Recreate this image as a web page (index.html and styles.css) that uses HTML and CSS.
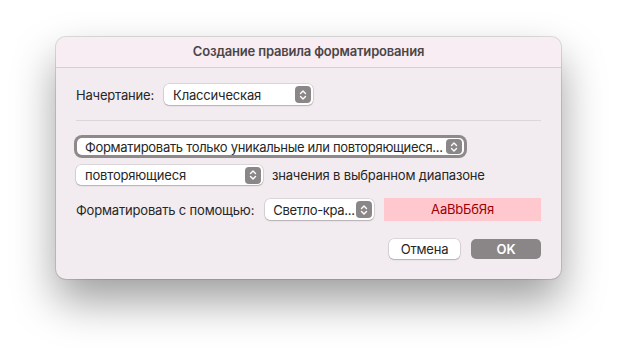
FILE: index.html
```html
<!DOCTYPE html>
<html lang="ru">
<head>
    <meta charset="UTF-8">
    <title>Создание правила форматирования</title>
    <link rel="stylesheet" href="styles.css">
</head>
<body>
    <div class="window">
        <div class="titlebar">Создание правила форматирования</div>

        <div class="content">
            <!-- стиль -->
            <div class="row row-style">
                <span class="label">Начертание:</span>
                <div class="popup popup-style">
                    <span class="popup-text">Классическая</span>
                    <span class="arrows"><svg width="8" height="12" viewBox="0 0 8 12"><path d="M1.5 4.5 L4 2 L6.5 4.5 M1.5 7.5 L4 10 L6.5 7.5" fill="none" stroke="#fff" stroke-width="1.4" stroke-linecap="round" stroke-linejoin="round"/></svg></span>
                </div>
            </div>

            <div class="divider"></div>

            <div class="focus-ring">
                <div class="popup popup-rule">
                    <span class="popup-text">Форматировать только уникальные или повторяющиеся...</span>
                    <span class="arrows"><svg width="8" height="12" viewBox="0 0 8 12"><path d="M1.5 4.5 L4 2 L6.5 4.5 M1.5 7.5 L4 10 L6.5 7.5" fill="none" stroke="#fff" stroke-width="1.4" stroke-linecap="round" stroke-linejoin="round"/></svg></span>
                </div>
            </div>

            <div class="row row-values">
                <div class="popup popup-dup">
                    <span class="popup-text">повторяющиеся</span>
                    <span class="arrows"><svg width="8" height="12" viewBox="0 0 8 12"><path d="M1.5 4.5 L4 2 L6.5 4.5 M1.5 7.5 L4 10 L6.5 7.5" fill="none" stroke="#fff" stroke-width="1.4" stroke-linecap="round" stroke-linejoin="round"/></svg></span>
                </div>
                <span class="label">значения в выбранном диапазоне</span>
            </div>

            <div class="row row-format">
                <span class="label">Форматировать с помощью:</span>
                <div class="popup popup-fill">
                    <span class="popup-text">Светло-кра...</span>
                    <span class="arrows"><svg width="8" height="12" viewBox="0 0 8 12"><path d="M1.5 4.5 L4 2 L6.5 4.5 M1.5 7.5 L4 10 L6.5 7.5" fill="none" stroke="#fff" stroke-width="1.4" stroke-linecap="round" stroke-linejoin="round"/></svg></span>
                </div>
                <div class="preview">АаВbБбЯя</div>
            </div>

            <div class="buttons">
                <button class="btn btn-cancel">Отмена</button>
                <button class="btn btn-ok">OK</button>
            </div>
        </div>
    </div>
</body>
</html>
```

FILE: styles.css
```css
* {
    box-sizing: border-box;
    margin: 0;
    padding: 0;
}

html, body {
    height: 100%;
}

body {
    font-family: 'Inter', 'Liberation Sans', sans-serif;
    font-size: 13px;
    letter-spacing: -0.18px;
    color: #262626;
    background: #ffffff;
    overflow: hidden;
}

.window {
    width: 505px;
    height: 242px;
    margin: 37px 0 0 56px;
    border-radius: 10px;
    background: #f2ecf0;
    box-shadow: 0 0 0 1px rgba(0,0,0,0.12), 0 22px 44px rgba(0,0,0,0.38);
    overflow: hidden;
}

.titlebar {
    height: 31px;
    line-height: 29px;
    text-align: center;
    font-weight: 600;
    color: #4b4548;
    background: #f7edf2;
    border-bottom: 1px solid #d6d0d3;
}

.content {
    padding: 16px 20px 0 20px;
    display: flex;
    flex-direction: column;
}

.row {
    display: flex;
    align-items: center;
}

.label {
    color: #262626;
    white-space: nowrap;
}

.popup {
    display: flex;
    align-items: center;
    justify-content: space-between;
    flex-shrink: 0;
    height: 21px;
    padding: 0 2px 0 9px;
    background: #ffffff;
    border-radius: 5px;
    box-shadow: 0 0 0 0.5px rgba(0,0,0,0.18), 0 1px 1.5px rgba(0,0,0,0.18);
}

.popup-text {
    white-space: nowrap;
}

.arrows {
    flex-shrink: 0;
    width: 16px;
    height: 17px;
    border-radius: 4px;
    background: #8b8789;
    display: flex;
    align-items: center;
    justify-content: center;
}

.row-style .label {
    margin-right: 10px;
}

.popup-style {
    width: 149px;
}

.divider {
    height: 1px;
    background: #dcd6d9;
    margin: 15px 0 14px 0;
}

.focus-ring {
    width: 393px;
    margin-left: -2px;
    padding: 3px;
    border-radius: 8px;
    background: #8e8a8c;
}

.popup-rule {
    height: 17px;
    box-shadow: none;
    padding-left: 8px;
}

.popup-rule .popup-text {
    letter-spacing: -0.3px;
}

.popup-rule .arrows {
    height: 15px;
}

.row-values {
    margin-top: 7px;
}

.popup-dup {
    width: 187px;
    height: 20px;
    margin-right: 9px;
}

.row-format {
    margin-top: 13px;
}

.row-format .label {
    margin-right: 11px;
}

.popup-fill {
    width: 109px;
    padding-left: 8px;
    margin-right: 10px;
}

.popup-fill .popup-text {
    letter-spacing: -0.3px;
}

.preview {
    flex: 1;
    height: 23px;
    line-height: 23px;
    text-align: center;
    background: #ffc7ce;
    color: #9c0006;
}

.buttons {
    display: flex;
    justify-content: flex-end;
    gap: 11px;
    margin-top: 18px;
}

.btn {
    font-family: inherit;
    font-size: 13px;
    letter-spacing: -0.18px;
    height: 20px;
    width: 71px;
    border: none;
    border-radius: 5px;
}

.btn-cancel {
    background: #ffffff;
    color: #262626;
    box-shadow: 0 0 0 0.5px rgba(0,0,0,0.18), 0 1px 1.5px rgba(0,0,0,0.18);
}

.btn-ok {
    width: 70px;
    background: #8a8688;
    color: #ffffff;
    font-weight: 600;
}
```
